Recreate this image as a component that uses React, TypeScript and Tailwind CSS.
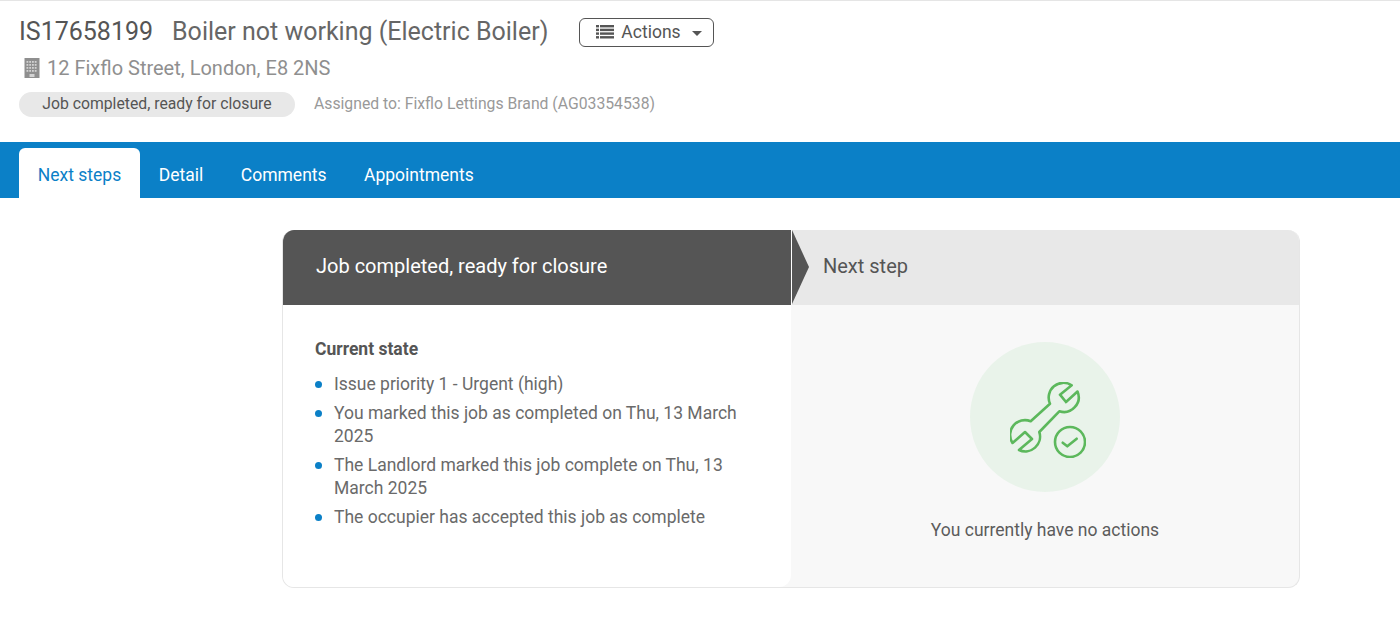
const stateItems = [
  'Issue priority 1 - Urgent (high)',
  'You marked this job as completed on Thu, 13 March 2025',
  'The Landlord marked this job complete on Thu, 13 March 2025',
  'The occupier has accepted this job as complete',
];

const tabs = ['Detail', 'Comments', 'Appointments'];

function ListIcon() {
  return (
    <svg width="18" height="14" viewBox="0 0 18 14" fill="#555555" className="shrink-0">
      <rect x="0" y="0" width="3" height="2.4" />
      <rect x="4" y="0" width="14" height="2.4" />
      <rect x="0" y="3.7" width="3" height="2.4" />
      <rect x="4" y="3.7" width="14" height="2.4" />
      <rect x="0" y="7.4" width="3" height="2.4" />
      <rect x="4" y="7.4" width="14" height="2.4" />
      <rect x="0" y="11.1" width="3" height="2.4" />
      <rect x="4" y="11.1" width="14" height="2.4" />
    </svg>
  );
}

function BuildingIcon() {
  const rows = [3, 6, 9, 12];
  const cols = [2.5, 5.25, 8, 10.75];
  return (
    <svg width="16" height="20" viewBox="0 0 16 20" className="ml-[5px] mr-[7px] shrink-0">
      <rect x="0.5" y="0" width="15" height="20" fill="#8f8f8f" />
      {rows.map((y) =>
        cols.map((x) => <rect key={`${x}-${y}`} x={x} y={y} width="1.8" height="1.8" fill="#d2d2d2" />),
      )}
      <rect x="5.5" y="16" width="5" height="3" fill="#d2d2d2" />
    </svg>
  );
}

function WrenchCheckIcon() {
  return (
    <svg width="76" height="76" viewBox="0 0 76 76" fill="none" stroke="#5cb85c" strokeWidth="2.6" strokeLinejoin="round" strokeLinecap="round" className="ml-[6px] mt-[6px]">
      <path d="M61.7 3.3 A14.8 14.8 0 0 0 40 21.7 L20.7 39.3 A14.8 14.8 0 0 0 2.5 61 L15 50 L22 57 L9 68 A14.8 14.8 0 0 0 29.3 50 L49.3 29.3 A14.8 14.8 0 0 0 67.5 9.5 L56 20 L50 12.7 Z" />
      <circle cx="60" cy="60" r="15" />
      <path d="M52.7 60.7 L57.3 64.3 L66.7 56.7" />
    </svg>
  );
}

export default function App() {
  return (
    <div className="min-h-[631px] bg-white font-['Roboto',sans-serif] border-t border-[#e5e5e5]">
      {/* Job header */}
      <div className="h-[141px] px-[19px]">
        <div className="flex h-[49px] items-center pt-[13px]">
          <h1 className="text-[25px] leading-[36px] text-[#555555]">IS17658199</h1>
          <span className="ml-[19px] text-[25px] leading-[36px] text-[#666666]">Boiler not working (Electric Boiler)</span>
          <button className="ml-[31px] flex h-[29px] w-[135px] items-center rounded-[6px] border border-[#555555] pl-[16px] text-[17.5px] text-[#555555]">
            <ListIcon />
            <span className="ml-[7px]">Actions</span>
            <span className="ml-[11px] mt-[2px] h-0 w-0 border-x-[5px] border-t-[5px] border-x-transparent border-t-[#555555]" />
          </button>
        </div>
        <div className="mt-[3px] flex h-[30px] items-center text-[20px] text-[#8f8f8f]">
          <BuildingIcon />
          12 Fixflo Street, London, E8 2NS
        </div>
        <div className="mt-[9px] flex items-start">
          <span className="flex h-[25px] w-[276px] items-center justify-center rounded-full bg-[#e8e8e8] pb-[2px] text-[15.75px] text-[#555555]">
            Job completed, ready for closure
          </span>
          <span className="ml-[19px] text-[15.75px] text-[#999999]">Assigned to: Fixflo Lettings Brand (AG03354538)</span>
        </div>
      </div>

      {/* Tabs */}
      <div className="flex h-[56px] items-end bg-[#0b80c7] px-[19px]">
        <div className="flex h-[50px] w-[121px] items-center justify-center rounded-t-[6px] bg-white pt-[4px] text-[17.5px] text-[#0b80c7]">
          Next steps
        </div>
        <div className="flex h-[50px] items-center pt-[4px] text-[17.5px] text-white">
          {tabs.map((tab) => (
            <span key={tab} className="mx-[18.75px]">{tab}</span>
          ))}
        </div>
      </div>

      {/* Steps card */}
      <div className="ml-[282px] mt-[32px] flex h-[358px] w-[1018px] flex-col overflow-hidden rounded-[12px] border-x border-b border-[#e6e6e6] bg-[#f8f8f8]">
        <div className="flex h-[75px] shrink-0">
          <div className="flex w-[508px] items-center bg-[#555555] pb-[3px] pl-[33px] text-[20px] text-white">
            Job completed, ready for closure
          </div>
          <div className="relative flex flex-1 items-center border-l border-white bg-[#e8e8e8] pb-[3px] pl-[31px] text-[20px] text-[#555555]">
            <span className="absolute left-0 top-0 h-0 w-0 border-y-[37.5px] border-l-[17px] border-y-transparent border-l-[#555555]" />
            Next step
          </div>
        </div>
        <div className="flex flex-1">
          <div className="w-[508px] rounded-br-[12px] bg-white pl-[32px] pr-[20px] pt-[33px]">
            <h2 className="text-[17.5px] font-bold leading-[22px] text-[#555555]">Current state</h2>
            <ul className="mt-[13px] flex flex-col gap-[6px]">
              {stateItems.map((item) => (
                <li key={item} className="relative pl-[19px] text-[17.5px] leading-[23px] text-[#6a6a6a]">
                  <span className="absolute left-0 top-[8px] h-[7px] w-[7px] rounded-full bg-[#0b80c7]" />
                  {item}
                </li>
              ))}
            </ul>
          </div>
          <div className="flex flex-1 flex-col items-center pt-[37px]">
            <div className="flex h-[150px] w-[150px] items-center justify-center rounded-full bg-[#e9f3ea]">
              <WrenchCheckIcon />
            </div>
            <p className="mt-[26px] text-[17.5px] leading-[24px] text-[#5c5c5c]">You currently have no actions</p>
          </div>
        </div>
      </div>
    </div>
  );
}
